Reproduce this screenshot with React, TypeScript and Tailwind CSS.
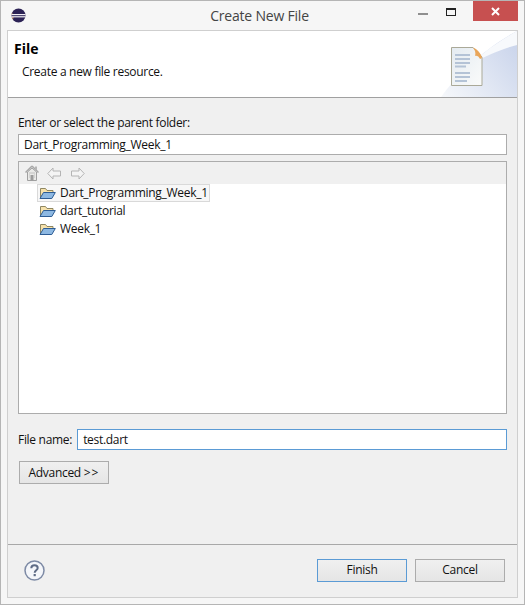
const FONT = "font-['Open_Sans','Noto_Sans',sans-serif]";

function EclipseLogo() {
  return (
    <svg width="15" height="15" viewBox="0 0 15 15">
      <circle cx="7.5" cy="7.5" r="7" fill="#2c2255" />
      <path d="M1.2 4.6a7 7 0 0 0 -.7 2.4h1.2zM1 9a7 7 0 0 0 1 2.6l.6-2.6z" fill="#d99a5a" />
      <rect x="0.5" y="6" width="14" height="1.2" fill="#f3f0f6" />
      <rect x="0.5" y="8.2" width="14" height="1.2" fill="#f3f0f6" />
    </svg>
  );
}

function BannerWash() {
  return (
    <svg width="76" height="66" viewBox="0 0 76 66" className="absolute right-0 top-0">
      <defs>
        <linearGradient id="wash" x1="0" y1="1" x2="1" y2="0.3">
          <stop offset="0" stopColor="#f6f8fb" />
          <stop offset="1" stopColor="#ccd6ec" />
        </linearGradient>
      </defs>
      <path d="M0 66C14 46 42 18 76 0V66z" fill="url(#wash)" />
      <path d="M30 33C44 20 60 9 76 0V14C60 18 42 26 30 33z" fill="#f7f9fc" />
    </svg>
  );
}

function FileBanner() {
  return (
    <svg width="32" height="40" viewBox="0 0 32 40">
      <defs>
        <linearGradient id="page" x1="0" y1="0" x2="1" y2="1">
          <stop offset="0" stopColor="#e4ebf1" />
          <stop offset="1" stopColor="#fafbfa" />
        </linearGradient>
      </defs>
      <path d="M.5.5H22L31 10V38.500H.5z" fill="url(#page)" stroke="#aaa998" />
      <path d="M22 .5C26 2 30 6 31 11L29 12C28 9 25 8 24 9C25 6 24 3 22 .5z" fill="#e9a65a" />
      <g fill="#b4c3d6">
        <rect x="4" y="7" width="15" height="2" />
        <rect x="4" y="11" width="15" height="2" />
        <rect x="4" y="15" width="15" height="2" />
        <rect x="4" y="18.500" width="11" height="2" />
        <rect x="4" y="25" width="15" height="2" />
        <rect x="4" y="29" width="15" height="2" />
        <rect x="4" y="33" width="12" height="2" />
      </g>
    </svg>
  );
}

function FolderIcon() {
  return (
    <svg width="17" height="14" viewBox="0 0 17 14" className="shrink-0">
      <path d="M1.500 12V2.500H6.500L8 4.500H14V6.500" fill="#f7e2ab" stroke="#8f8762" />
      <path d="M1 12.500L4.500 6.500H16.300L12.800 12.500z" fill="#8db8e2" stroke="#2d5c94" />
    </svg>
  );
}

function HomeIcon() {
  return (
    <svg width="14" height="16" viewBox="0 0 14 16">
      <path d="M7 1L.5 7.500M7 1L13.500 7.500" stroke="#a8a8a8" strokeWidth="1.500" fill="none" />
      <path d="M2.500 7L7 3L11.500 7V15.500H2.500z" fill="#e9e9e7" stroke="#a0a0a0" />
      <path d="M4 8H10M4 10H5M9 10H10M4 12H5M9 12H10" stroke="#c0c0c0" />
      <rect x="5.500" y="10" width="3" height="5.500" fill="#9c9c9c" />
      <rect x="10" y="1.500" width="2" height="3.500" fill="#b5b5b5" />
    </svg>
  );
}

function ArrowIcon({ flip }: { flip?: boolean }) {
  return (
    <svg width="14" height="13" viewBox="0 0 14 13" className={flip ? "-scale-x-100" : ""}>
      <path d="M.8 6.500L6 1V4H13.500V9H6V12z" fill="#f4f4f4" stroke="#b4b4b4" />
    </svg>
  );
}

function HelpIcon() {
  return (
    <svg width="21" height="21" viewBox="0 0 21 21">
      <circle cx="10.500" cy="10.500" r="9.500" fill="#f4f6fa" stroke="#7d8aa5" strokeWidth="1.500" />
      <path d="M7.300 8.200C7.300 6.300 8.700 5.300 10.500 5.300C12.400 5.300 13.700 6.400 13.700 8C13.700 10.200 10.700 10.400 10.700 12.700" fill="none" stroke="#5e6b85" strokeWidth="2" />
      <rect x="9.600" y="14" width="2.200" height="2.200" fill="#5e6b85" />
    </svg>
  );
}

function TreeRow({ label, selected }: { label: string; selected?: boolean }) {
  return (
    <div className={`flex items-center gap-[4px] h-[18px] pl-[1px] w-fit pr-[1px] border ${selected ? "border-[#d9d9d9] bg-[#f7f7f7]" : "border-transparent"}`}>
      <FolderIcon />
      <span>{label}</span>
    </div>
  );
}

function WinButton({ label, primary }: { label: string; primary?: boolean }) {
  return (
    <button className={`w-[90px] h-[23px] border text-center bg-gradient-to-b from-[#f0f0f0] to-[#e5e5e5] ${primary ? "border-[#5b9bd5]" : "border-[#acacac]"}`}>
      {label}
    </button>
  );
}

export default function App() {
  return (
    <div className={`w-[525px] h-[605px] flex flex-col border border-[#b5b5b5] bg-[#f6f6f6] text-[12px] leading-[16px] tracking-[-0.3px] text-[#111] ${FONT}`}>
      {/* Title bar */}
      <div className="h-[29px] shrink-0 flex items-center relative">
        <div className="ml-[10px] -mt-[1px]"><EclipseLogo /></div>
        <div className="absolute left-0 right-0 top-[6px] text-center text-[14px] leading-[18px] tracking-[-0.2px] text-[#444] pr-[6px]">Create New File</div>
        <div className="ml-auto flex items-start h-full">
          <div className="w-[10px] h-[2px] bg-[#8f8f8f] mt-[12px] mr-[18px]" />
          <div className="w-[8px] h-[5px] border border-[#222] border-t-[2px] mt-[7px] mr-[17px] box-content" />
          <div className="w-[45px] h-[20px] bg-[#c75050] text-white flex items-center justify-center mr-[6px]">
            <svg width="9" height="9" viewBox="0 0 9 9"><path d="M1 1L8 8M8 1L1 8" stroke="#fff" strokeWidth="2" /></svg>
          </div>
        </div>
      </div>

      {/* Dialog */}
      <div className="flex-1 mx-[6px] mb-[6px] flex flex-col border border-[#cfcfcf] bg-[#f0f0f0]">
        {/* Banner */}
        <div className="h-[66px] shrink-0 bg-white border-b border-[#a0a0a0] box-content relative overflow-hidden flex">
          <BannerWash />
          <div className="relative flex-1 pl-[6px] pt-[9px]">
            <div className="text-[14px] leading-[17px] font-bold tracking-normal text-black">File</div>
            <div className="pl-[8px] mt-[7px]">Create a new file resource.</div>
          </div>
          <div className="relative mt-[16px] mr-[34px]"><FileBanner /></div>
        </div>

        {/* Fields */}
        <div className="flex-1 flex flex-col px-[10px] pt-[17px]">
          <div className="h-[16px]">Enter or select the parent folder:</div>
          <div className="mt-[3px] h-[21px] bg-white border border-[#acacac] pl-[5px] flex items-center">Dart_Programming_Week_1</div>
          <div className="mt-[6px] h-[253px] bg-white border border-[#acacac] flex flex-col">
            <div className="h-[22px] bg-[#f0f0f0] flex items-center pl-[6px] shrink-0">
              <HomeIcon />
              <div className="ml-[8px]"><ArrowIcon /></div>
              <div className="ml-[10px]"><ArrowIcon flip /></div>
            </div>
            <div className="pl-[18px]">
              <TreeRow label="Dart_Programming_Week_1" selected />
              <TreeRow label="dart_tutorial" />
              <TreeRow label="Week_1" />
            </div>
          </div>
          <div className="mt-[15px] flex items-center gap-[5px]">
            <span>File name:</span>
            <div className="flex-1 h-[21px] bg-white border border-[#5b9bd5] pl-[5px] flex items-center">test.dart</div>
          </div>
          <button className="mt-[11px] ml-[1px] w-[90px] h-[23px] border border-[#acacac] text-center bg-gradient-to-b from-[#f0f0f0] to-[#e5e5e5]">Advanced <span className="tracking-[1px]">&gt;&gt;</span></button>
        </div>

        {/* Footer */}
        <div className="h-[53px] shrink-0 border-t border-[#a8a8a8] flex items-center pl-[16px] pr-[12px]">
          <div className="-mt-[2px]"><HelpIcon /></div>
          <div className="ml-auto flex gap-[8px] -mt-[2px]">
            <WinButton label="Finish" primary />
            <WinButton label="Cancel" />
          </div>
        </div>
      </div>
    </div>
  );
}
